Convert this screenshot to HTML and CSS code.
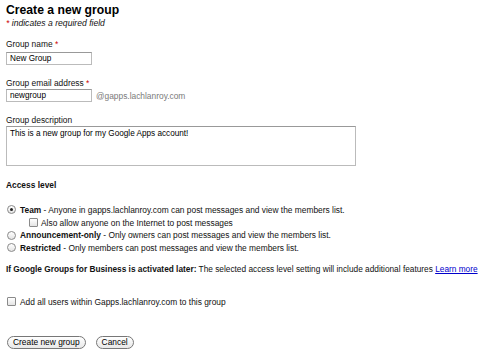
FILE: index.html
```html
<!DOCTYPE html>
<html lang="en">
<head>
    <meta charset="UTF-8">
    <title>Create a new group</title>
    <link rel="stylesheet" href="styles.css">
</head>
<body>
    <div class="page">
        <h1>Create a new group</h1>
        <p class="note"><span class="req">*</span> indicates a required field</p>

        <div class="field first">
            <label for="name">Group name <span class="req">*</span></label>
            <input class="text" id="name" type="text" value="New Group">
        </div>

        <div class="field">
            <label for="email">Group email address <span class="req">*</span></label>
            <div class="email-row">
                <input class="text" id="email" type="text" value="newgroup">
                <span class="domain">@gapps.lachlanroy.com</span>
            </div>
        </div>

        <div class="field">
            <label for="desc">Group description</label>
            <textarea id="desc">This is a new group for my Google Apps account!</textarea>
        </div>

        <h2>Access level</h2>
        <div class="options">
            <label class="option"><input type="radio" name="access" checked><span><b>Team</b> - Anyone in gapps.lachlanroy.com can post messages and view the members list.</span></label>
            <label class="option sub"><input type="checkbox"><span>Also allow anyone on the Internet to post messages</span></label>
            <label class="option"><input type="radio" name="access"><span><b>Announcement-only</b> - Only owners can post messages and view the members list.</span></label>
            <label class="option"><input type="radio" name="access"><span><b>Restricted</b> - Only members can post messages and view the members list.</span></label>
        </div>

        <p class="later"><b>If Google Groups for Business is activated later:</b> The selected access level setting will include additional features <a href="#">Learn more</a></p>

        <label class="option add-all"><input type="checkbox"><span>Add all users within Gapps.lachlanroy.com to this group</span></label>

        <div class="buttons">
            <button type="submit">Create new group</button>
            <button type="button">Cancel</button>
        </div>
    </div>
</body>
</html>
```

FILE: styles.css
```css
/* General Styles */
body {
    margin: 0;
    background: #fff;
    color: #111;
    font-family: "Liberation Sans", Arial, sans-serif;
    font-size: 8.4px;
}

.page {
    padding: 3px 6px 0 6px;
}

h1 {
    margin: 0;
    font-size: 12.2px;
    line-height: 15px;
    font-weight: bold;
    color: #000;
}

.note {
    margin: 0;
    font-size: 8.6px;
    line-height: 10px;
    font-style: italic;
}

.req {
    color: #cc0000;
}

/* Form fields */
.field {
    margin-top: 13px;
}

.field.first {
    margin-top: 11px;
}

.field label {
    display: block;
    line-height: 11px;
}

.field.first label {
    margin-bottom: 2px;
}

.text {
    box-sizing: border-box;
    width: 86px;
    height: 13px;
    margin: 0;
    padding: 0 3px;
    border: 1px solid #bbb;
    border-top-color: #999;
    font-family: "Liberation Sans", Arial, sans-serif;
    font-size: 8.2px;
    color: #000;
}

.email-row {
    display: flex;
    align-items: center;
    gap: 4px;
}

.domain {
    color: #7a7a7a;
}

textarea {
    display: block;
    box-sizing: border-box;
    width: 350px;
    height: 40px;
    margin: 0;
    padding: 2px 3px;
    border: 1px solid #bbb;
    border-top-color: #999;
    resize: none;
    font-family: "Liberation Sans", Arial, sans-serif;
    font-size: 8.2px;
    color: #000;
}

h2 {
    margin: 14px 0 0 0;
    font-size: 8.4px;
    line-height: 11px;
    font-weight: bold;
}

/* Radio and checkbox rows */
.options {
    margin-top: 12.5px;
}

.option {
    display: flex;
    align-items: center;
    gap: 4px;
    height: 12.7px;
    white-space: nowrap;
}

.option.sub {
    padding-left: 22px;
    gap: 3px;
}

input[type="radio"],
input[type="checkbox"] {
    appearance: none;
    -webkit-appearance: none;
    box-sizing: border-box;
    width: 9px;
    height: 9px;
    margin: 0 0 0 1px;
    border: 1px solid #8a8a8a;
    background: linear-gradient(#ffffff, #e4e4e4);
    flex: none;
}

input[type="radio"] {
    border-radius: 50%;
    position: relative;
}

input[type="checkbox"] {
    border-radius: 1px;
}

input[type="radio"]:checked::after {
    content: "";
    position: absolute;
    left: 2px;
    top: 2px;
    width: 3px;
    height: 3px;
    border-radius: 50%;
    background: #222;
}

.later {
    margin: 9px 0 0 0;
    font-size: 8.3px;
    line-height: 12px;
    white-space: nowrap;
}

.later a {
    color: #0000cc;
}

.add-all {
    margin-top: 20px;
    height: 13px;
}

/* Buttons */
.buttons {
    display: flex;
    gap: 10px;
    margin-top: 28px;
    padding-left: 1px;
}

button {
    height: 13px;
    padding: 0 5px;
    border: 1px solid #777;
    border-radius: 7px;
    background: linear-gradient(#ffffff, #e8e8e8);
    font-family: "Liberation Sans", Arial, sans-serif;
    font-size: 8.4px;
    line-height: 11px;
    color: #000;
}
```
